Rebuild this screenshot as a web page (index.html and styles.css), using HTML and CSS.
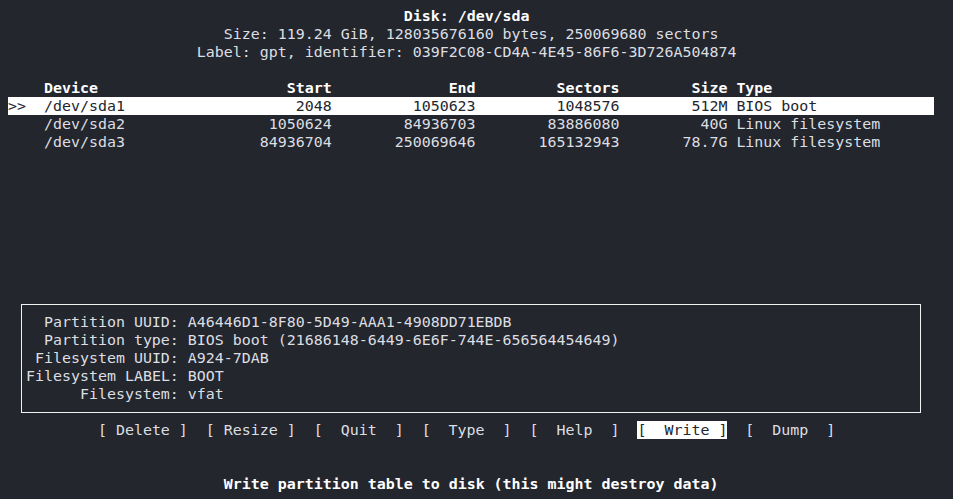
FILE: index.html
```html
<!DOCTYPE html>
<html lang="en">
<head>
<meta charset="utf-8">
<title>cfdisk</title>
<link rel="stylesheet" href="styles.css">
</head>
<body>
<main class="term">
  <header class="disk">
    <div class="line bold pad-44">Disk: /dev/sda</div>
    <div class="line pad-24">Size: 119.24 GiB, 128035676160 bytes, 250069680 sectors</div>
    <div class="line pad-21">Label: gpt, identifier: 039F2C08-CD4A-4E45-86F6-3D726A504874</div>
  </header>

  <section class="parts">
    <div class="prow head bold">
      <span></span><span>Device</span><span class="r">Start</span><span class="r">End</span><span class="r">Sectors</span><span class="r">Size</span><span></span><span>Type</span>
    </div>
    <div class="prow selected">
      <span>&gt;&gt;</span><span>/dev/sda1</span><span class="r">2048</span><span class="r">1050623</span><span class="r">1048576</span><span class="r">512M</span><span></span><span>BIOS boot</span>
    </div>
    <div class="prow">
      <span></span><span>/dev/sda2</span><span class="r">1050624</span><span class="r">84936703</span><span class="r">83886080</span><span class="r">40G</span><span></span><span>Linux filesystem</span>
    </div>
    <div class="prow">
      <span></span><span>/dev/sda3</span><span class="r">84936704</span><span class="r">250069646</span><span class="r">165132943</span><span class="r">78.7G</span><span></span><span>Linux filesystem</span>
    </div>
  </section>

  <section class="info">
    <div class="irow"><span class="k">Partition UUID:</span><span>A46446D1-8F80-5D49-AAA1-4908DD71EBDB</span></div>
    <div class="irow"><span class="k">Partition type:</span><span>BIOS boot (21686148-6449-6E6F-744E-656564454649)</span></div>
    <div class="irow"><span class="k">Filesystem UUID:</span><span>A924-7DAB</span></div>
    <div class="irow"><span class="k">Filesystem LABEL:</span><span>BOOT</span></div>
    <div class="irow"><span class="k">Filesystem:</span><span>vfat</span></div>
  </section>

  <nav class="menu">
    <span class="btn">[ Delete ]</span>
    <span class="btn">[ Resize ]</span>
    <span class="btn">[  Quit  ]</span>
    <span class="btn">[  Type  ]</span>
    <span class="btn">[  Help  ]</span>
    <span class="btn active">[  Write ]</span>
    <span class="btn">[  Dump  ]</span>
  </nav>

  <footer class="hint bold">Write partition table to disk (this might destroy data)</footer>
</main>
</body>
</html>
```

FILE: styles.css
```css
html, body {
  margin: 0;
  padding: 0;
  background: #23262d;
}

body {
  width: 953px;
  height: 499px;
  overflow: hidden;
}

.term {
  padding: 7px 0 0 8px;
  width: 103ch;
  font-family: "DejaVu Sans Mono", monospace;
  font-size: 14.95px;
  line-height: 18px;
  color: #dcdee2;
}

.line {
  white-space: pre;
  height: 18px;
}

.bold {
  font-weight: bold;
  color: #ffffff;
}

.pad-44 { padding-left: 44ch; }
.pad-24 { padding-left: 24ch; }
.pad-21 { padding-left: 21ch; }

.parts {
  margin-top: 18px;
}

.prow {
  display: grid;
  grid-template-columns: 4ch 9ch 23ch 16ch 16ch 12ch 1ch 22ch;
  height: 18px;
  white-space: pre;
}

.prow .r {
  text-align: right;
}

.prow.selected {
  background: #ffffff;
  color: #23262d;
}

.info {
  margin: 153px 0 8px calc(1ch + 4px);
  width: calc(100ch + 1px);
  box-sizing: border-box;
  border: 1px solid #f2f2f2;
  padding: 8px 0 9px 4px;
}

.irow {
  display: grid;
  grid-template-columns: 17ch 1ch auto;
  height: 18px;
  white-space: pre;
}

.irow .k {
  text-align: right;
}

.irow span:last-child {
  grid-column: 3;
}

.menu {
  display: flex;
  gap: 2ch;
  padding-left: 10ch;
  height: 18px;
  white-space: pre;
}

.btn {
  width: 10ch;
}

.btn.active {
  background: #ffffff;
  color: #23262d;
}

.hint {
  margin-top: 36px;
  padding-left: 24ch;
  white-space: pre;
  height: 18px;
}
```
